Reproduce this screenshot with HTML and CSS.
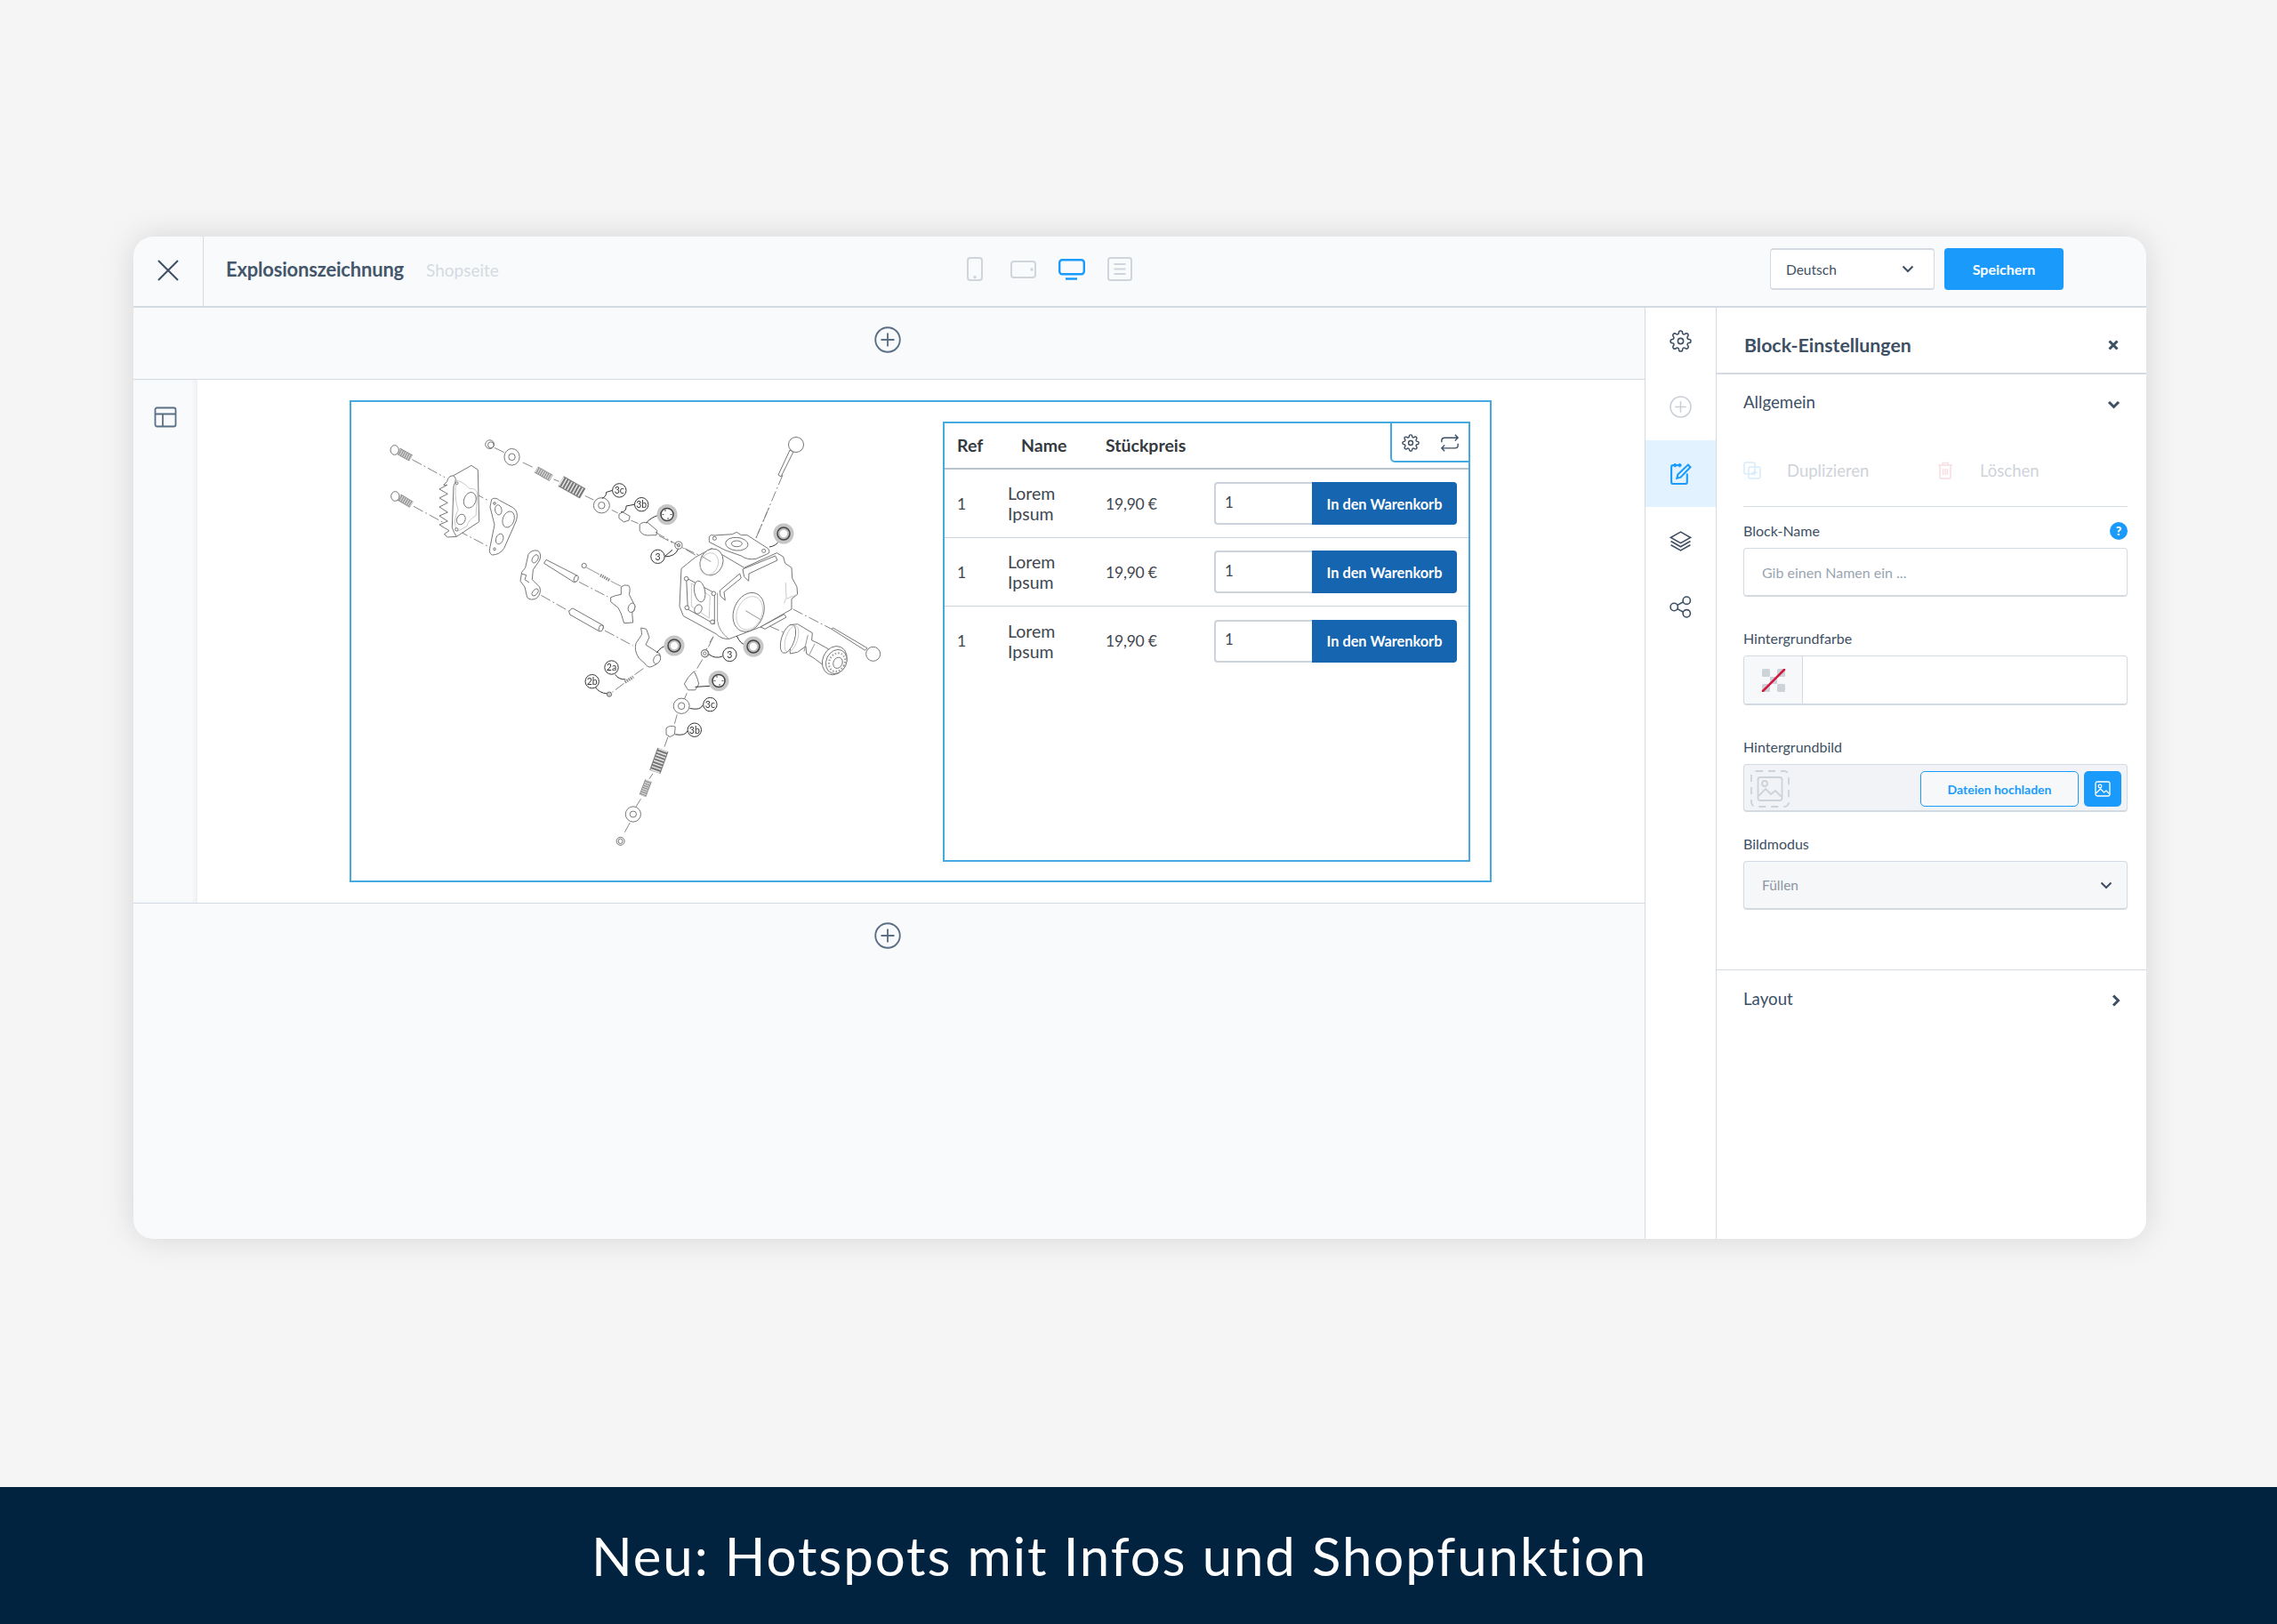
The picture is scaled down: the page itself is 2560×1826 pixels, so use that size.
FILE: index.html
```html
<!DOCTYPE html>
<html lang="de">
<head>
    <meta charset="UTF-8">
    <title>Explosionszeichnung</title>
    <link rel="stylesheet" href="styles.css">
</head>
<body>
    <svg class="defs" width="0" height="0">
        <defs>
            <g id="i-gear">
                <circle cx="12" cy="12" r="3"/>
                <path d="M19.4 15a1.65 1.65 0 0 0 .33 1.82l.06.06a2 2 0 0 1 0 2.83 2 2 0 0 1-2.83 0l-.06-.06a1.65 1.65 0 0 0-1.82-.33 1.65 1.65 0 0 0-1 1.51V21a2 2 0 0 1-2 2 2 2 0 0 1-2-2v-.09A1.65 1.65 0 0 0 9 19.4a1.65 1.65 0 0 0-1.82.33l-.06.06a2 2 0 0 1-2.83 0 2 2 0 0 1 0-2.83l.06-.06a1.65 1.65 0 0 0 .33-1.82 1.65 1.65 0 0 0-1.51-1H3a2 2 0 0 1-2-2 2 2 0 0 1 2-2h.09A1.65 1.65 0 0 0 4.6 9a1.65 1.65 0 0 0-.33-1.82l-.06-.06a2 2 0 0 1 0-2.83 2 2 0 0 1 2.83 0l.06.06a1.65 1.65 0 0 0 1.82.33H9a1.65 1.65 0 0 0 1-1.51V3a2 2 0 0 1 2-2 2 2 0 0 1 2 2v.09a1.65 1.65 0 0 0 1 1.51 1.65 1.65 0 0 0 1.82-.33l.06-.06a2 2 0 0 1 2.83 0 2 2 0 0 1 0 2.83l-.06.06a1.65 1.65 0 0 0-.33 1.82V9a1.65 1.65 0 0 0 1.51 1H21a2 2 0 0 1 2 2 2 2 0 0 1-2 2h-.09a1.65 1.65 0 0 0-1.51 1z"/>
            </g>
            <g id="i-plus">
                <circle cx="12" cy="12" r="11"/>
                <path d="M12 6v12M6 12h12"/>
            </g>
        </defs>
    </svg>

    <div class="stage">
        <div class="window">
            <header class="topbar">
                <div class="close-cell">
                    <svg class="icon-close" viewBox="0 0 24 24"><path d="M1 1l22 22M23 1L1 23"/></svg>
                </div>
                <div class="title-block">
                    <span class="page-title">Explosionszeichnung</span>
                    <span class="page-sub">Shopseite</span>
                </div>
                <div class="devices">
                    <svg class="device phone" viewBox="0 0 18 27"><rect x="1" y="1" width="16" height="25" rx="3"/><circle cx="9" cy="22.500" r=".8"/></svg>
                    <svg class="device tablet" viewBox="0 0 29 20"><rect x="1" y="1" width="27" height="18" rx="3"/><circle cx="24" cy="10" r=".8"/></svg>
                    <svg class="device desktop" viewBox="0 0 30 24"><rect x="1.200" y="1.200" width="27.600" height="16" rx="3"/><path class="base" d="M8 22.500h13"/></svg>
                    <svg class="device list" viewBox="0 0 28 27"><rect x="1" y="1" width="26" height="25" rx="2.500"/><path d="M7.500 8h13M7.500 13.500h13M7.500 19h13"/></svg>
                </div>
                <div class="top-actions">
                    <div class="lang-select">
                        <span>Deutsch</span>
                        <svg class="chev" viewBox="0 0 14 9"><path d="M1.500 1.500L7 7l5.500-5.500"/></svg>
                    </div>
                    <button class="save-btn">Speichern</button>
                </div>
            </header>

            <div class="workspace">
                <main class="canvas">
                    <div class="add-bar add-top">
                        <svg class="add-icon" viewBox="0 0 24 24"><use href="#i-plus"/></svg>
                    </div>

                    <section class="row">
                        <div class="row-handle">
                            <svg class="layout-icon" viewBox="0 0 26 26">
                                <rect x="1.500" y="2.500" width="23" height="21" rx="2"/>
                                <path d="M1.500 9.500h23M10 9.500v14"/>
                            </svg>
                        </div>
                        <div class="row-body">
                            <div class="frame">
                                <svg class="drawing" viewBox="395 452 665 537" width="665" height="537">
                                    <!-- bolts, plate, gasket -->
                                    <g class="part" transform="translate(420 480) scale(.3333)">
                                        <path class="dash" d="M130 110L240 170M135 268L240 325M285 195L390 250M285 350L390 405"/>
                                        <line class="shank" x1="84" y1="82" x2="126" y2="105"/>
                                        <line class="shank-h" x1="84" y1="82" x2="126" y2="105"/>
                                        <ellipse cx="71" cy="78" rx="14" ry="16"/>
                                        <line class="shank" x1="86" y1="237" x2="128" y2="262"/>
                                        <line class="shank-h" x1="86" y1="237" x2="128" y2="262"/>
                                        <ellipse cx="73" cy="234" rx="14" ry="16"/>
                                        <path d="M268 165L330 130L352 145L356 320L280 370L250 372L238 362L255 350L222 330L250 318L222 300L250 288L222 270L250 256L222 240L250 226L222 210L248 196L236 196L248 184Q252 164 268 165Z"/>
                                        <path d="M268 165Q285 170 270 200L265 340Q270 355 280 370"/>
                                        <path class="soft" d="M280 180Q310 190 322 208Q350 205 350 230L345 300Q320 312 315 335L283 352Q265 320 285 280Q270 230 280 180Z"/>
                                        <ellipse cx="325" cy="247" rx="20" ry="27" transform="rotate(20 325 247)"/>
                                        <ellipse cx="295" cy="312" rx="14" ry="18" transform="rotate(25 295 312)"/>
                                        <circle cx="281" cy="190" r="4"/>
                                        <circle cx="280" cy="346" r="5"/>
                                        <path d="M398 245Q410 235 425 248L470 272Q490 285 482 315L440 410Q425 432 400 432Q388 426 392 410L408 330L393 270Z"/>
                                        <ellipse cx="421" cy="280" rx="11" ry="17" transform="rotate(-10 421 280)"/>
                                        <ellipse cx="455" cy="312" rx="19" ry="28" transform="rotate(20 455 312)"/>
                                        <ellipse cx="425" cy="378" rx="12" ry="18" transform="rotate(20 425 378)"/>
                                        <circle cx="408" cy="258" r="4"/>
                                        <circle cx="408" cy="412" r="4"/>
                                    </g>

                                    <!-- lever parts -->
                                    <g class="part" transform="translate(570 610) scale(.3333)">
                                        <path class="dash" d="M243 133L340 183M115 178L210 232M330 297L425 348M460 425L425 450M395 475L355 505"/>
                                        <path d="M72 40Q85 22 105 28Q118 40 110 60L88 92L85 125L110 150Q118 170 100 188Q80 198 68 185L60 150L45 130L50 100L62 85Z"/>
                                        <ellipse cx="95" cy="55" rx="9" ry="15" transform="rotate(30 95 55)"/>
                                        <ellipse cx="95" cy="168" rx="8" ry="14" transform="rotate(40 95 168)"/>
                                        <path d="M48 105L65 110L60 125L75 135"/>
                                        <path d="M125 70L132 58L238 112Q244 125 228 135Z"/>
                                        <ellipse cx="233" cy="122" rx="7" ry="11" transform="rotate(20 233 122)"/>
                                        <circle cx="260" cy="78" r="8"/>
                                        <path class="thin" d="M268 84L312 108M350 130L385 148"/>
                                        <line class="shank-s" x1="315" y1="110" x2="348" y2="128"/>
                                        <path d="M385 150Q395 140 410 145Q418 155 412 175L432 215Q430 235 422 235L425 270L395 272L385 240L375 220L350 200L350 185Q365 178 385 175Z"/>
                                        <ellipse cx="420" cy="220" rx="11" ry="16" transform="rotate(20 420 220)"/>
                                        <path d="M215 225L222 222L325 280Q328 295 312 300L212 243Q205 232 215 225Z"/>
                                        <ellipse cx="317" cy="289" rx="7" ry="11" transform="rotate(20 317 289)"/>
                                        <path d="M452 288L470 292L480 320L468 345L515 375Q522 395 505 410L490 418Q475 425 465 408L445 390Q428 365 435 340Q445 325 455 310Z"/>
                                        <ellipse cx="506" cy="394" rx="11" ry="16" transform="rotate(25 506 394)"/>
                                        <line class="shank-s" x1="398" y1="471" x2="426" y2="453"/>
                                        <circle class="pin-head" cx="345" cy="512" r="8"/>
                                        <path class="lead" d="M505 372Q520 350 540 348M365 445Q375 462 400 462M298 488Q310 507 338 510M532 47L558 25"/>
                                    </g>

                                    <!-- valve trains -->
                                    <g class="part" transform="translate(400 450) scale(.4082 .3448)">
                                        <path class="dash" d="M382 155L412 172M460 203L490 220M545 258L560 265M632 312L655 325M705 358L722 368M758 392L778 402M835 442L872 465M905 483L945 505"/>
                                        <path class="dash" d="M985 770L975 790M968 808L964 815M955 845L935 885M912 955L905 975M885 1025L878 1055M860 1098L850 1130M818 1218L808 1235M785 1300L772 1325M755 1378L740 1410"/>
                                        <ellipse cx="369" cy="144" rx="12" ry="14"/>
                                        <ellipse cx="372" cy="146" rx="8" ry="10"/>
                                        <ellipse cx="430" cy="185" rx="21" ry="27"/>
                                        <ellipse cx="430" cy="185" rx="9" ry="11"/>
                                        <line class="shank" x1="497" y1="226" x2="538" y2="254"/>
                                        <line class="shank-h" x1="497" y1="226" x2="538" y2="254"/>
                                        <line class="spring" x1="565" y1="264" x2="625" y2="304"/>
                                        <line class="spring-h" x1="565" y1="264" x2="625" y2="304"/>
                                        <ellipse cx="677" cy="343" rx="22" ry="25"/>
                                        <ellipse cx="677" cy="343" rx="9" ry="11"/>
                                        <path d="M725 372L735 365L755 378L752 392L738 397L725 385Z"/>
                                        <path d="M782 405Q790 395 805 400L830 425L828 440L815 440Q790 445 782 425Z"/>
                                        <ellipse cx="889" cy="473" rx="10" ry="12"/>
                                        <ellipse cx="889" cy="473" rx="4" ry="5"/>
                                        <path class="lead" d="M678 320Q690 315 690 300L707 294M730 365Q745 365 745 345L768 340M800 400Q815 380 835 375M888 485Q880 510 852 510"/>

                                        <ellipse cx="962" cy="826" rx="10" ry="12"/>
                                        <ellipse cx="962" cy="826" rx="4" ry="5"/>
                                        <path d="M932 885L940 905L945 925L935 945L915 945L905 925L915 905L928 888Z"/>
                                        <ellipse cx="897" cy="997" rx="22" ry="25"/>
                                        <ellipse cx="897" cy="997" rx="9" ry="11"/>
                                        <path d="M855 1070Q865 1058 880 1065L878 1090L865 1098L855 1090Z"/>
                                        <line class="spring" x1="846" y1="1140" x2="824" y2="1212"/>
                                        <line class="spring-h" x1="846" y1="1140" x2="824" y2="1212"/>
                                        <line class="shank" x1="806" y1="1240" x2="790" y2="1290"/>
                                        <line class="shank-h" x1="806" y1="1240" x2="790" y2="1290"/>
                                        <ellipse cx="764" cy="1350" rx="21" ry="25"/>
                                        <ellipse cx="764" cy="1350" rx="9" ry="10"/>
                                        <ellipse cx="729" cy="1438" rx="11" ry="13"/>
                                        <ellipse cx="729" cy="1438" rx="6" ry="8"/>
                                        <path class="lead" d="M972 828Q990 845 1010 835M935 935L975 932M920 1005Q950 1012 955 995M880 1090Q910 1095 913 1078"/>
                                    </g>

                                    <!-- carburettor body -->
                                    <g class="part" transform="translate(740 570) scale(.3333)">
                                        <path class="dash" d="M330 105L375 0M455 345L585 412M-10 85L130 165M185 440L168 475"/>
                                        <path d="M78 208L125 170L180 140L290 205L400 155L422 168L428 190L450 205L452 240L468 270L470 295L450 310L450 345L345 405L240 445Q215 448 195 428L85 368L72 335Z"/>
                                        <path d="M172 100Q175 92 190 96L250 92L265 85L280 95L300 95L370 140Q382 155 365 160L330 175Q300 180 280 165Q225 150 172 118Z"/>
                                        <ellipse cx="265" cy="125" rx="38" ry="22" transform="rotate(5 265 125)"/>
                                        <ellipse cx="265" cy="124" rx="18" ry="10"/>
                                        <circle cx="190" cy="106" r="6"/>
                                        <circle cx="356" cy="148" r="6"/>
                                        <ellipse cx="180" cy="186" rx="38" ry="46" transform="rotate(22 180 186)"/>
                                        <ellipse cx="172" cy="192" rx="30" ry="38" class="soft" transform="rotate(22 172 192)"/>
                                        <path class="thin" d="M145 165L178 185"/>
                                        <path d="M95 240L190 290L190 395L100 345Z"/>
                                        <path class="soft" d="M112 258L175 300L172 375L112 335Z"/>
                                        <ellipse cx="140" cy="285" rx="18" ry="36" transform="rotate(-10 140 285)"/>
                                        <ellipse cx="135" cy="345" rx="12" ry="16" transform="rotate(25 135 345)"/>
                                        <circle cx="95" cy="242" r="7"/>
                                        <circle cx="187" cy="292" r="7"/>
                                        <circle cx="97" cy="340" r="7"/>
                                        <circle cx="183" cy="388" r="7"/>
                                        <path d="M208 282L275 225L280 240L222 287L226 315L210 300Z"/>
                                        <path d="M285 210L395 165L402 180L306 225L305 250L290 235Z"/>
                                        <path class="thin" d="M200 290V385Q205 420 238 445"/>
                                        <path class="soft" d="M430 255L432 310L470 295M430 310L425 325"/>
                                        <path d="M345 405L425 362L432 372L360 412Z"/>
                                        <ellipse cx="305" cy="355" rx="50" ry="68" transform="rotate(22 305 355)"/>
                                        <ellipse cx="308" cy="358" rx="42" ry="58" class="soft" transform="rotate(22 308 358)"/>
                                        <path class="thin" d="M295 350L345 380"/>
                                        <path class="dash" d="M375 402L425 424"/>
                                        <path d="M585 412L590 408L705 476L698 484Z"/>
                                        <circle cx="725" cy="496" r="24"/>
                                        <path d="M445 398L470 395L520 425L518 450L540 460L575 480L552 530L525 510L500 495L498 470L470 490L445 495Z"/>
                                        <ellipse cx="438" cy="445" rx="22" ry="50" transform="rotate(18 438 445)"/>
                                        <ellipse cx="450" cy="445" rx="20" ry="46" class="soft" transform="rotate(18 450 445)"/>
                                        <path class="thin" d="M505 432L492 488M528 462L510 498"/>
                                        <ellipse cx="595" cy="518" rx="40" ry="50" transform="rotate(25 595 518)"/>
                                        <ellipse cx="601" cy="522" rx="34" ry="42" transform="rotate(25 601 522)"/>
                                        <ellipse class="beads" cx="603" cy="524" rx="26" ry="32" transform="rotate(25 603 524)"/>
                                        <ellipse cx="606" cy="526" rx="15" ry="19" transform="rotate(25 606 526)"/>
                                        <path class="lead" d="M375 135Q398 132 410 112M265 435Q278 465 298 465"/>
                                        <ellipse cx="157" cy="494" rx="12" ry="12"/>
                                        <ellipse cx="157" cy="494" rx="5" ry="5"/>
                                    </g>

                                    <!-- top lever rod -->
                                    <g class="part">
                                        <path class="dash" d="M880 534L850 605"/>
                                        <path d="M892 508L878 536L875 534L888 506Z"/>
                                        <circle cx="895" cy="500" r="8.500"/>
                                    </g>

                                    <!-- highlighted rings -->
                                    <g class="ring" transform="translate(881 600)"><circle class="halo" r="11.500"/><circle class="band" r="7"/><circle class="eye" r="4.200"/></g>
                                    <g class="ring" transform="translate(847 727)"><circle class="halo" r="11.500"/><circle class="band" r="7"/><circle class="eye" r="4.200"/></g>
                                    <g class="ring" transform="translate(758 726)"><circle class="halo" r="11.500"/><circle class="band" r="7"/><circle class="eye" r="4.200"/></g>
                                    <g class="ring" transform="translate(750 578.500)"><circle class="halo" r="11.500"/><circle class="band open" r="7"/><path class="ticks" d="M-2-5.500v2M-5.500 0h2M5.500 0h-2M1 5.500v-2"/></g>
                                    <g class="ring" transform="translate(808 765.500)"><circle class="halo" r="11.500"/><circle class="band open" r="7"/><path class="ticks" d="M-2-5.500v2M-5.500 0h2M5.500 0h-2M1 5.500v-2"/></g>

                                    <g class="label">
                                        <circle cx="696.300" cy="551.400" r="7.700"/><text x="696.300" y="555">3c</text>
                                        <circle cx="721.200" cy="567.200" r="7.700"/><text x="721.200" y="571">3b</text>
                                        <circle cx="739.500" cy="625.800" r="7.700"/><text x="739.500" y="629.500">3</text>
                                        <circle cx="820.400" cy="735.900" r="7.700"/><text x="820.400" y="739.500">3</text>
                                        <circle cx="798.400" cy="792.100" r="7.700"/><text x="798.400" y="796">3c</text>
                                        <circle cx="780.800" cy="820.700" r="7.700"/><text x="780.800" y="824.500">3b</text>
                                        <circle cx="687.500" cy="750.500" r="7.700"/><text x="687.500" y="754">2a</text>
                                        <circle cx="665.700" cy="766.200" r="7.700"/><text x="665.700" y="770">2b</text>
                                    </g>
                                </svg>

                                <div class="shop-table">
                                    <div class="table-tools">
                                        <svg class="tool-icon" viewBox="0 0 24 24"><use href="#i-gear"/></svg>
                                        <svg class="tool-icon" viewBox="0 0 24 24"><path d="M19 1l4 4-4 4M1 11V9a4 4 0 0 1 4-4h18M5 23l-4-4 4-4M23 13v2a4 4 0 0 1-4 4H1"/></svg>
                                    </div>
                                    <div class="table-row table-head">
                                        <span>Ref</span>
                                        <span class="head-name">Name</span>
                                        <span>Stückpreis</span>
                                    </div>
                                    <div class="table-row">
                                        <span>1</span>
                                        <span class="cell-name">Lorem<br>Ipsum</span>
                                        <span class="cell-price">19,90 €</span>
                                        <div class="buy">
                                            <input class="qty" value="1">
                                            <button class="cart-btn">In den Warenkorb</button>
                                        </div>
                                    </div>
                                    <div class="table-row">
                                        <span>1</span>
                                        <span class="cell-name">Lorem<br>Ipsum</span>
                                        <span class="cell-price">19,90 €</span>
                                        <div class="buy">
                                            <input class="qty" value="1">
                                            <button class="cart-btn">In den Warenkorb</button>
                                        </div>
                                    </div>
                                    <div class="table-row row-last">
                                        <span>1</span>
                                        <span class="cell-name">Lorem<br>Ipsum</span>
                                        <span class="cell-price">19,90 €</span>
                                        <div class="buy">
                                            <input class="qty" value="1">
                                            <button class="cart-btn">In den Warenkorb</button>
                                        </div>
                                    </div>
                                </div>
                            </div>
                        </div>
                    </section>

                    <div class="add-bar add-bottom">
                        <svg class="add-icon" viewBox="0 0 24 24"><use href="#i-plus"/></svg>
                    </div>
                </main>

                <nav class="tool-rail">
                    <div class="rail-item">
                        <svg class="rail-icon" viewBox="0 0 24 24"><use href="#i-gear"/></svg>
                    </div>
                    <div class="rail-item item-muted">
                        <svg class="rail-icon" viewBox="0 0 24 24"><use href="#i-plus"/></svg>
                    </div>
                    <div class="rail-item item-active">
                        <svg class="rail-icon" viewBox="0 0 24 24">
                            <path d="M13 3H4a2 2 0 0 0-2 2v16a2 2 0 0 0 2 2h13a2 2 0 0 0 2-2v-9"/>
                            <path d="M6 1v4M11 1v4"/>
                            <path d="M20 2.500l2.500 2.500L12 16l-4 1 1-4z"/>
                        </svg>
                    </div>
                    <div class="rail-item">
                        <svg class="rail-icon" viewBox="0 0 24 24">
                            <path d="M12 3L1.500 9 12 15l10.500-6z"/>
                            <path d="M1.500 13L12 19l10.500-6M1.500 17L12 23l10.500-6"/>
                        </svg>
                    </div>
                    <div class="rail-item">
                        <svg class="rail-icon" viewBox="0 0 24 24">
                            <circle cx="18.500" cy="5" r="4"/>
                            <circle cx="5" cy="12" r="4"/>
                            <circle cx="18.500" cy="19" r="4"/>
                            <path d="M8.500 10l6.500-3.500M8.500 14l6.500 3.500"/>
                        </svg>
                    </div>
                </nav>

                <aside class="panel">
                    <div class="panel-head">
                        <span class="panel-title">Block-Einstellungen</span>
                        <svg class="panel-x" viewBox="0 0 12 12"><path d="M1.500 1.500l9 9M10.500 1.500l-9 9"/></svg>
                    </div>
                    <div class="panel-section">
                        <div class="section-head">
                            <span>Allgemein</span>
                            <svg class="section-chev" viewBox="0 0 14 10"><path d="M1.500 2L7 7.500 12.500 2"/></svg>
                        </div>
                        <div class="panel-actions">
                            <svg class="act-icon act-copy" viewBox="0 0 20 20">
                                <rect x="1" y="1" width="12" height="13" rx="2"/>
                                <rect x="6" y="6" width="13" height="13" rx="2"/>
                                <path d="M12.500 9.500v6M9.500 12.500h6"/>
                            </svg>
                            <span class="act-label label-dup">Duplizieren</span>
                            <svg class="act-icon act-trash" viewBox="0 0 18 20">
                                <path d="M1 4h16M6 4V1.500h6V4M3 4v14a1 1 0 0 0 1 1h10a1 1 0 0 0 1-1V4M6.500 8v7M9 8v7M11.500 8v7"/>
                            </svg>
                            <span class="act-label">Löschen</span>
                        </div>

                        <div class="field field-first">
                            <div class="field-label">
                                <span>Block-Name</span>
                                <span class="help">?</span>
                            </div>
                            <input class="text-input" placeholder="Gib einen Namen ein ...">
                        </div>

                        <div class="field">
                            <div class="field-label"><span>Hintergrundfarbe</span></div>
                            <div class="color-box">
                                <div class="swatch">
                                    <svg class="swatch-icon" viewBox="0 0 28 26">
                                        <rect x="1" y="0" width="9" height="9" rx="1.500"/>
                                        <rect x="18" y="0" width="9" height="9" rx="1.500"/>
                                        <rect x="10" y="9" width="8" height="8"/>
                                        <rect x="1" y="17" width="9" height="9" rx="1.500"/>
                                        <rect x="18" y="17" width="9" height="9" rx="1.500"/>
                                        <path class="slash" d="M2 25L26 1"/>
                                    </svg>
                                </div>
                            </div>
                        </div>

                        <div class="field">
                            <div class="field-label"><span>Hintergrundbild</span></div>
                            <div class="image-box">
                                <svg class="image-ph" viewBox="0 0 44 42">
                                    <rect class="ph-dash" x="1" y="1" width="42" height="40" rx="5"/>
                                    <rect x="8.500" y="8" width="27" height="26" rx="2.500"/>
                                    <circle cx="16" cy="15" r="3"/>
                                    <path d="M9 29l8-8 6 6 5-4 7 7"/>
                                </svg>
                                <button class="upload-btn">Dateien hochladen</button>
                                <button class="pick-btn">
                                    <svg viewBox="0 0 18 18">
                                        <rect x="1" y="1" width="16" height="16" rx="2"/>
                                        <circle cx="6" cy="6" r="1.800"/>
                                        <path d="M1.500 14l5-5 4 4 2.500-2 3.500 3.500"/>
                                    </svg>
                                </button>
                            </div>
                        </div>

                        <div class="field field-mode">
                            <div class="field-label"><span>Bildmodus</span></div>
                            <div class="mode-select">
                                <span>Füllen</span>
                                <svg class="chev" viewBox="0 0 14 9"><path d="M1.500 1.500L7 7l5.500-5.500"/></svg>
                            </div>
                        </div>
                    </div>
                    <div class="section-head section-closed">
                        <span>Layout</span>
                        <svg class="section-chev-r" viewBox="0 0 10 14"><path d="M2 1.500L7.500 7 2 12.500"/></svg>
                    </div>
                </aside>
            </div>
        </div>
    </div>

    <footer class="banner">Neu: Hotspots mit Infos und Shopfunktion</footer>
</body>
</html>
```

FILE: styles.css
```css
* {
    box-sizing: border-box;
}
html, body {
    margin: 0;
    padding: 0;
}
body {
    width: 2560px;
    height: 1826px;
    background-color: #f5f5f5;
    font-family: "Lato", "Noto Sans", sans-serif;
    color: #3d4f63;
    display: flex;
    flex-direction: column;
    overflow: hidden;
}
button, input {
    font-family: inherit;
}
svg {
    display: block;
    fill: none;
}
.defs {
    position: absolute;
}
.stage {
    height: 1672px;
    padding: 266px 0 0 150px;
}
.window {
    width: 2263px;
    height: 1127px;
    background-color: #f9fafc;
    border-radius: 22px;
    box-shadow: 0 0 36px rgba(0, 0, 0, 0.13);
    overflow: hidden;
    display: flex;
    flex-direction: column;
}

/* top bar */
.topbar {
    height: 80px;
    flex-shrink: 0;
    border-bottom: 2px solid #d3dae2;
    display: flex;
    align-items: center;
}
.close-cell {
    width: 79px;
    height: 100%;
    border-right: 1px solid #d3dae2;
    display: flex;
    align-items: center;
    justify-content: center;
    padding-bottom: 2px;
}
.icon-close {
    width: 24px;
    height: 24px;
    stroke: #3d4f63;
    stroke-width: 2;
}
.title-block {
    width: 858px;
    padding: 0 0 6px 25px;
    display: flex;
    align-items: baseline;
    gap: 25px;
}
.page-title {
    font-size: 22px;
    font-weight: 700;
    letter-spacing: -0.2px;
    color: #44566a;
}
.page-sub {
    font-size: 19px;
    color: #d5dae0;
}
.devices {
    display: flex;
    align-items: center;
    gap: 25px;
    margin-top: -5px;
}
.device {
    stroke: #d0d5db;
    stroke-width: 2;
}
.phone {
    width: 18px;
    height: 27px;
    margin-right: 6px;
}
.tablet {
    width: 29px;
    height: 20px;
}
.desktop {
    width: 30px;
    height: 24px;
    stroke: #1a9bfb;
    stroke-width: 2.4;
    margin-top: 1px;
}
.list {
    width: 28px;
    height: 27px;
}
.top-actions {
    margin-left: auto;
    padding-right: 93px;
    margin-top: -5px;
    display: flex;
    gap: 11px;
}
.lang-select {
    width: 185px;
    height: 47px;
    background-color: #fff;
    border: 1px solid #d3dae2;
    border-top-width: 2px;
    border-bottom-width: 2px;
    border-radius: 4px;
    padding: 0 22px 0 17px;
    font-size: 15.500px;
    display: flex;
    align-items: center;
    justify-content: space-between;
}
.chev {
    width: 14px;
    height: 9px;
    stroke: #3d4f63;
    stroke-width: 2;
}
.save-btn {
    width: 134px;
    height: 47px;
    border: 0;
    border-radius: 4px;
    background-color: #1a9bfb;
    color: #fff;
    font-size: 16px;
    font-weight: 700;
}

/* canvas */
.workspace {
    flex: 1;
    display: flex;
    min-height: 0;
}
.canvas {
    width: 1699px;
    flex-shrink: 0;
}
.add-bar {
    display: flex;
    justify-content: center;
    padding-right: 3px;
}
.add-top {
    height: 80px;
    align-items: center;
    padding-bottom: 8px;
}
.add-bottom {
    padding-top: 21px;
}
.add-icon {
    width: 30px;
    height: 30px;
    stroke: #5a6f85;
    stroke-width: 1.500;
}
.row {
    height: 590px;
    display: flex;
    border-top: 1px solid #d3dae2;
    border-bottom: 1px solid #d3dae2;
}
.row-handle {
    width: 72px;
    padding-top: 29px;
    display: flex;
    justify-content: center;
    box-shadow: inset -4px 0 4px rgba(60, 80, 100, 0.05);
}
.layout-icon {
    width: 26px;
    height: 26px;
    stroke: #5a6f85;
    stroke-width: 1.800;
}
.row-body {
    flex: 1;
    background-color: #fff;
    padding: 23px 0 0 171px;
}
.frame {
    width: 1284px;
    height: 542px;
    border: 2px solid #45a9e2;
    padding: 22px 22px 0 0;
    display: flex;
    position: relative;
}
.drawing {
    position: absolute;
    left: 0;
    top: 0;
    filter: blur(0.35px);
}
.part * {
    fill: #fff;
    stroke: #666;
    stroke-width: 0.900;
    vector-effect: non-scaling-stroke;
}
.part .dash {
    fill: none;
    stroke: #777;
    stroke-dasharray: 12 3 2 3;
}
.part .soft {
    fill: none;
    stroke: #c4c4c4;
}
.part .thin {
    fill: none;
    stroke: #8a8a8a;
}
.part .lead {
    fill: none;
    stroke: #333;
    stroke-width: 1;
}
.part .pin-head {
    fill: #ccc;
}
.part .beads {
    fill: none;
    stroke-width: 2;
    stroke: #999;
    stroke-dasharray: 1.500 2;
}
.part .shank {
    stroke: #888;
    stroke-width: 8;
}
.part .shank-h {
    stroke: #d4d4d4;
    stroke-width: 6.500;
    stroke-dasharray: 1.500 1;
}
.part .shank-s {
    stroke: #888;
    stroke-width: 3.500;
    stroke-dasharray: 1.500 1;
}
.part .spring {
    stroke: #777;
    stroke-width: 13;
}
.part .spring-h {
    stroke: #e6e6e6;
    stroke-width: 11;
    stroke-dasharray: 1.500 2;
}
.ring .halo {
    fill: #c6c6c6;
}
.ring .band {
    fill: #bdbdbd;
    stroke: #444;
    stroke-width: 1.500;
}
.ring .open {
    fill: #fff;
}
.ring .eye {
    fill: #fff;
}
.ring .ticks {
    stroke: #555;
    stroke-width: 1;
}
.label circle {
    fill: #fff;
    stroke: #333;
    stroke-width: 1;
}
.label text {
    fill: #333;
    font-size: 10.500px;
    text-anchor: middle;
}

/* product table */
.shop-table {
    width: 593px;
    height: 495px;
    margin-left: auto;
    border: 2px solid #45a9e2;
    background-color: #fff;
    position: relative;
}
.table-tools {
    position: absolute;
    top: -2px;
    right: -2px;
    width: 90px;
    height: 46px;
    border: 2px solid #45a9e2;
    border-radius: 0 0 0 5px;
    background-color: #fff;
    display: flex;
    align-items: center;
    justify-content: space-between;
    padding: 1px 11px 0 11px;
}
.tool-icon {
    width: 20px;
    height: 20px;
    stroke: #3d4f63;
    stroke-width: 1.700;
}
.table-row {
    height: 77px;
    display: grid;
    grid-template-columns: 57px 110px 122px 273px;
    align-items: center;
    padding-left: 14px;
    border-bottom: 1px solid #ccd3da;
    font-size: 17.500px;
    line-height: 23px;
    color: #3f4650;
}
.table-head {
    height: 52px;
    padding-bottom: 2px;
    border-bottom: 2px solid #b8c2cc;
    font-size: 19.500px;
    font-weight: 700;
    color: #343a40;
}
.head-name {
    padding-left: 15px;
}
.cell-name {
    font-size: 19.500px;
}
.cell-price {
    letter-spacing: -0.2px;
}
.row-last {
    border-bottom: 0;
}
.buy {
    display: flex;
    height: 48px;
}
.qty {
    width: 110px;
    border: 2px solid #ccd3da;
    border-right: 0;
    border-radius: 4px 0 0 4px;
    padding: 0 0 4px 10px;
    font-size: 17px;
    color: #3f4650;
    outline: 0;
}
.cart-btn {
    flex: 1;
    border: 0;
    border-radius: 0 4px 4px 0;
    background-color: #1565b0;
    color: #fff;
    font-size: 16.300px;
    font-weight: 700;
    padding: 0;
}

/* icon rail */
.tool-rail {
    width: 81px;
    flex-shrink: 0;
    background-color: #fff;
    border-left: 1px solid #d3dae2;
    border-right: 1px solid #d3dae2;
}
.rail-item {
    height: 75px;
    display: flex;
    align-items: center;
    justify-content: center;
}
.rail-item:first-child {
    height: 74px;
}
.rail-icon {
    width: 25px;
    height: 25px;
    stroke: #3d4f63;
    stroke-width: 1.500;
}
.item-muted .rail-icon {
    stroke: #c9cfd6;
}
.item-active {
    background-color: #e2f2fe;
}
.item-active .rail-icon {
    stroke: #1a9bfb;
    stroke-width: 2;
}

/* settings panel */
.panel {
    flex: 1;
    background-color: #fff;
    min-width: 0;
}
.panel-head {
    height: 75px;
    border-bottom: 2px solid #d3dae2;
    padding: 11px 31px 0 31px;
    display: flex;
    align-items: center;
    justify-content: space-between;
}
.panel-title {
    font-size: 21.300px;
    font-weight: 700;
}
.panel-x {
    width: 12px;
    height: 12px;
    stroke: #3d4f63;
    stroke-width: 3;
}
.panel-section {
    padding: 0 21px 0 30px;
    height: 670px;
    border-bottom: 1px solid #d3dae2;
}
.section-head {
    height: 62px;
    font-size: 18.700px;
    display: flex;
    align-items: center;
    justify-content: space-between;
}
.section-chev {
    width: 15px;
    height: 10px;
    margin: 6px 8px 0 0;
    stroke: #3d4f63;
    stroke-width: 3;
}
.section-closed {
    padding: 0 29px 0 30px;
    height: 64px;
}
.section-chev-r {
    width: 10px;
    height: 14px;
    margin-top: 3px;
    stroke: #3d4f63;
    stroke-width: 3;
}
.panel-actions {
    height: 87px;
    border-bottom: 1px solid #d3dae2;
    padding-top: 5px;
    display: flex;
    align-items: center;
    font-size: 18.500px;
    color: #ced3d9;
}
.act-icon {
    width: 20px;
    height: 20px;
}
.act-copy {
    stroke: #d6ebfb;
    stroke-width: 1.500;
}
.act-trash {
    width: 18px;
    stroke: #f8dde1;
    stroke-width: 1.500;
    margin: 0 30px 0 0;
}
.act-label {
    white-space: nowrap;
}
.label-dup {
    margin-left: 29px;
    width: 169px;
}
.field {
    margin-top: 37px;
}
.field-first {
    margin-top: 17px;
}
.field-label {
    height: 20px;
    margin-bottom: 9px;
    font-size: 16px;
    line-height: 20px;
    display: flex;
    justify-content: space-between;
}
.help {
    width: 20px;
    height: 20px;
    border-radius: 50%;
    background-color: #1a9bfb;
    color: #fff;
    font-size: 14px;
    font-weight: 900;
    text-align: center;
}
.text-input {
    width: 100%;
    height: 55px;
    border: 1px solid #d3dae2;
    border-bottom-width: 2px;
    border-radius: 4px;
    padding: 0 20px;
    font-size: 16px;
    outline: 0;
}
.text-input::placeholder {
    color: #9aa5b1;
    opacity: 1;
}
.color-box {
    height: 56px;
    border: 1px solid #d3dae2;
    border-bottom-width: 2px;
    border-radius: 4px;
    overflow: hidden;
}
.swatch {
    width: 66px;
    height: 100%;
    background-color: #f7f8fa;
    border-right: 1px solid #d3dae2;
    display: flex;
    align-items: center;
    justify-content: center;
}
.swatch-icon {
    width: 28px;
    height: 26px;
}
.swatch-icon rect {
    fill: #ccd3d9;
}
.slash {
    stroke: #d3173f;
    stroke-width: 2.500;
    stroke-linecap: round;
}
.image-box {
    height: 54px;
    background-color: #f1f3f6;
    border: 1px solid #d3dae2;
    border-bottom-width: 2px;
    border-radius: 4px;
    padding: 6px 6px 0 7px;
    display: flex;
    align-items: flex-start;
}
.image-ph {
    width: 44px;
    height: 42px;
    stroke: #cdd3da;
    stroke-width: 1.800;
    margin-right: auto;
}
.ph-dash {
    stroke-dasharray: 8 6;
}
.upload-btn {
    width: 178px;
    height: 40px;
    margin-top: 1px;
    background-color: #f6f8fa;
    border: 1.500px solid #1a9bfb;
    border-radius: 5px;
    color: #1a9bfb;
    font-size: 14px;
    font-weight: 700;
    padding: 0;
}
.pick-btn {
    width: 42px;
    height: 40px;
    margin: 1px 0 0 6px;
    background-color: #1a9bfb;
    border: 0;
    border-radius: 5px;
    padding: 11px 12px;
}
.pick-btn svg {
    width: 18px;
    height: 18px;
    stroke: #fff;
    stroke-width: 1.300;
}
.field-mode {
    margin-top: 26px;
}
.mode-select {
    height: 55px;
    background-color: #f6f7f9;
    border: 1px solid #d3dae2;
    border-bottom-width: 2px;
    border-radius: 4px;
    padding: 0 16px 0 20px;
    font-size: 15.500px;
    color: #8b96a2;
    display: flex;
    align-items: center;
    justify-content: space-between;
}

/* caption */
.banner {
    height: 154px;
    flex-shrink: 0;
    background-color: #01233f;
    color: #fff;
    font-size: 60px;
    font-weight: 400;
    letter-spacing: 1.880px;
    display: flex;
    align-items: center;
    padding-left: 665px;
}
```
